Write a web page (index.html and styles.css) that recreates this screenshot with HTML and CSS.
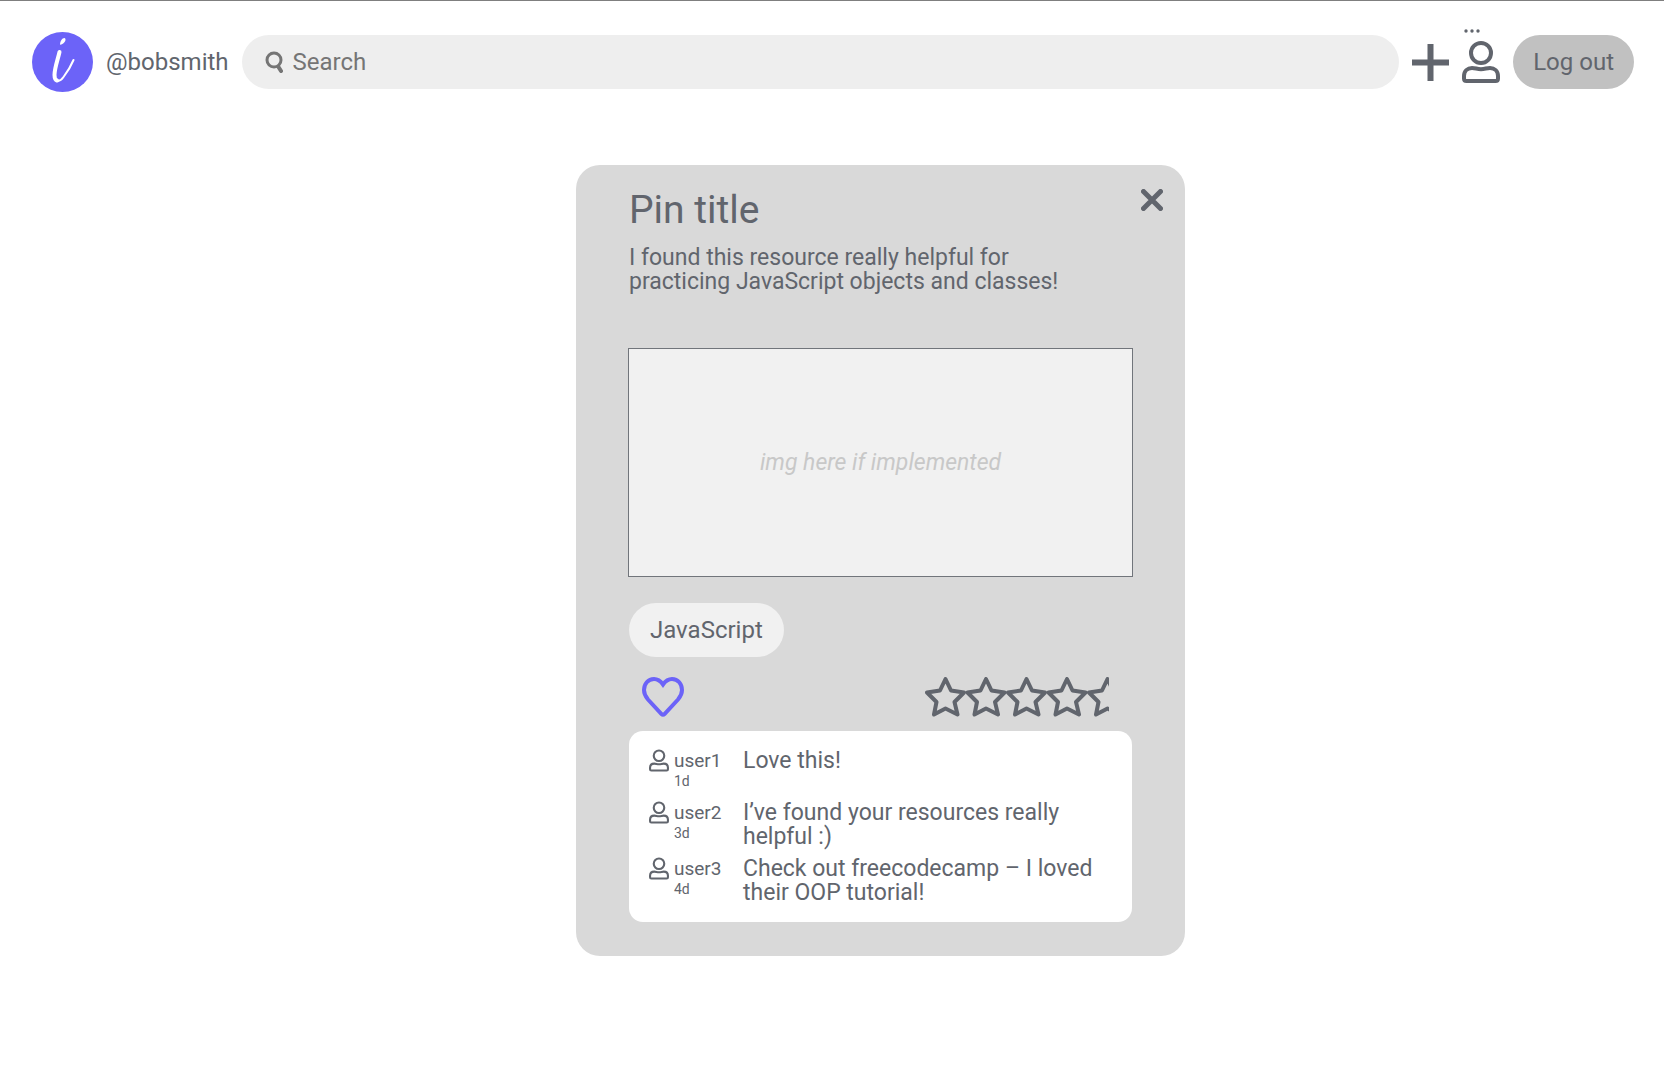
FILE: index.html
```html
<!DOCTYPE html>
<html lang="en">
<head>
<meta charset="utf-8">
<meta name="viewport" content="width=device-width, initial-scale=1">
<title>Pin title</title>
<link rel="stylesheet" href="styles.css">
</head>
<body>
<svg class="sprite" aria-hidden="true">
  <symbol id="person" viewBox="0 0 38 42">
    <g fill="none" stroke="currentColor" stroke-width="4">
      <circle cx="19" cy="12" r="10"/>
      <path d="M2 37.500V35C2 30 5.500 27 10 27C13.500 27 15 28.200 19 28.200S24.500 27 28 27C32.500 27 36 30 36 35V37.500Q36 40 33.500 40H4.500Q2 40 2 37.500Z"/>
    </g>
  </symbol>
</svg>

<header class="topbar">
  <a class="logo" href="#" aria-label="Home">
    <svg viewBox="0 0 61 60" aria-hidden="true">
      <ellipse class="logo-disc" cx="30.500" cy="30" rx="30.500" ry="30"/>
      <path d="M28 12.500C28.200 9 30 6 32.500 6C35 7 32.500 12 28.500 12.800Z" fill="#fff"/>
      <path d="M27.500 20C26 27 22 36 22.500 43C23 51 28 50 31.500 45C36 39 39 34 41.500 28" fill="none" stroke="#fff" stroke-width="2" stroke-linecap="round"/>
      <path d="M27.500 20C26 27 22.500 36 22.500 43C22.500 46 23.500 48 25 48.500" fill="none" stroke="#fff" stroke-width="4" stroke-linecap="round"/>
    </svg>
  </a>
  <a class="handle" href="#">@bobsmith</a>
  <form class="search" role="search">
    <svg class="search-icon" viewBox="0 0 18 22" aria-hidden="true">
      <g fill="none" stroke="currentColor" stroke-linecap="round"><circle cx="9" cy="9" r="7" stroke-width="3"/><path d="M13.500 16L16 20" stroke-width="4"/></g>
    </svg>
    <input class="search-input" type="search" placeholder="Search" aria-label="Search">
  </form>
  <button class="icon-button" type="button" aria-label="Add pin">
    <svg class="plus" viewBox="0 0 37 37" aria-hidden="true"><path d="M18.500 3V34M3 18.500H34" stroke="currentColor" stroke-width="6" stroke-linecap="square"/></svg>
  </button>
  <button class="icon-button profile" type="button" aria-label="Profile">
    <svg class="dots" viewBox="0 0 16 4" aria-hidden="true"><g fill="currentColor"><circle cx="2" cy="2" r="1.700"/><circle cx="8" cy="2" r="1.700"/><circle cx="14" cy="2" r="1.700"/></g></svg>
    <svg class="person-large" aria-hidden="true"><use href="#person"/></svg>
  </button>
  <button class="pill logout" type="button">Log out</button>
</header>

<main class="stage">
  <article class="card">
    <button class="icon-button close" type="button" aria-label="Close">
      <svg viewBox="0 0 22 22" aria-hidden="true"><path d="M2.500 2.500L19.500 19.500M19.500 2.500L2.500 19.500" stroke="currentColor" stroke-width="5" stroke-linecap="round"/></svg>
    </button>
    <h1 class="title">Pin title</h1>
    <p class="description">I found this resource really helpful for practicing JavaScript objects and classes!</p>
    <div class="picture">img here if implemented</div>
    <a class="pill tag" href="#">JavaScript</a>
    <div class="reactions">
      <button class="icon-button" type="button" aria-label="Like">
        <svg class="heart" viewBox="0 0 42 40" aria-hidden="true"><path d="M21 7.500C18.500 4 15.500 2 12 2C6 2 2 7 2 13C2 17 3.500 19.500 6 22.500L19.500 37Q21 38.500 22.500 37L36 22.500C38.500 19.500 40 17 40 13C40 7 36 2 30 2C26.500 2 23.500 4 21 7.500Z" fill="none" stroke="currentColor" stroke-width="4"/></svg>
      </button>
      <svg class="stars" viewBox="0 0 184 40" role="img" aria-label="4.5 stars">
        <defs><path id="star" d="M20.500 2L26 13.500L39 15.500L29.500 25L32.500 37.500L20.500 31.500L9 37.500L11.500 25L2 15.500L15 13.500Z"/></defs>
        <g fill="none" stroke="currentColor" stroke-width="4" stroke-linejoin="round">
          <use href="#star"/><use href="#star" x="40.500"/><use href="#star" x="81"/><use href="#star" x="121.500"/><use href="#star" x="162"/>
        </g>
      </svg>
    </div>
    <ul class="comments">
      <li class="comment">
        <svg class="person-small" aria-hidden="true"><use href="#person"/></svg>
        <div class="author"><a class="name" href="#">user1</a><span class="age">1d</span></div>
        <p class="message">Love this!</p>
      </li>
      <li class="comment">
        <svg class="person-small" aria-hidden="true"><use href="#person"/></svg>
        <div class="author"><a class="name" href="#">user2</a><span class="age">3d</span></div>
        <p class="message">I’ve found your resources really helpful :)</p>
      </li>
      <li class="comment">
        <svg class="person-small" aria-hidden="true"><use href="#person"/></svg>
        <div class="author"><a class="name" href="#">user3</a><span class="age">4d</span></div>
        <p class="message">Check out freecodecamp – I loved their OOP tutorial!</p>
      </li>
    </ul>
  </article>
</main>
</body>
</html>
```
FILE: styles.css
```css
*, *::before, *::after { box-sizing: border-box; }

body {
  margin: 0;
  border-top: 1px solid #7f7f7f;
  background: #fff;
  color: #61656d;
  font: 24px/24px Roboto, "Liberation Sans", sans-serif;
}

svg { display: block; }
h1, p, ul { margin: 0; padding: 0; }
a { color: inherit; text-decoration: none; }
button, input { font: inherit; color: inherit; }

.sprite { position: absolute; width: 0; height: 0; }

.topbar {
  display: flex;
  align-items: center;
  gap: 13px;
  padding: 31px 30px 0 32px;
}

.logo svg { width: 61px; height: 60px; }
.logo-disc { fill: #6c63f8; }

.search {
  display: flex;
  flex: 1;
  align-items: center;
  gap: 10px;
  height: 54px;
  padding: 0 23px;
  border-radius: 27px;
  background: #eee;
  color: #757575;
}
.search-icon { width: 18px; height: 22px; }
.search-input {
  flex: 1;
  min-width: 0;
  padding: 0;
  border: 0;
  outline: 0;
  background: none;
}
.search-input::placeholder { color: #757575; opacity: 1; }

.icon-button {
  padding: 0;
  border: 0;
  background: none;
  cursor: pointer;
}
.plus { width: 37px; height: 37px; }
.profile { position: relative; }
.person-large { width: 38px; height: 42px; }
.dots {
  position: absolute;
  top: -12px;
  left: 2px;
  width: 16px;
  height: 4px;
}

.pill {
  height: 54px;
  padding: 0 20px;
  border: 0;
  border-radius: 27px;
  line-height: 54px;
}
.logout { background: #c1c1c1; }

.stage {
  display: flex;
  justify-content: center;
  padding: 73px 0 48px 97px;
}

.card {
  position: relative;
  display: flex;
  flex-direction: column;
  align-items: stretch;
  width: 100%;
  max-width: 609px;
  padding: 21px 53px 34px;
  border-radius: 24px;
  background: #d9d9d9;
}
.close { position: absolute; top: 24px; right: 22px; }
.close svg { width: 22px; height: 22px; }

.title { font-size: 39px; font-weight: 400; line-height: 48px; }
.description, .picture, .message { font-size: 23px; }
.description { max-width: 450px; margin-top: 12px; }

.picture {
  display: grid;
  place-items: center;
  height: 229px;
  margin: 54px -1px 0;
  border: 1px solid #71757b;
  background: #f1f1f1;
  color: #c8c8c8;
  font-style: italic;
}

.tag { align-self: flex-start; margin-top: 26px; padding: 0 21px; background: #f1f1f1; }

.reactions {
  display: flex;
  justify-content: space-between;
  margin-top: 20px;
  padding: 0 23px 0 13px;
}
.heart { width: 42px; height: 40px; color: #6c63f8; }
.stars { width: 184px; height: 40px; }

.comments {
  display: grid;
  gap: 8px;
  margin-top: 14px;
  padding: 18px 20px 17px;
  border-radius: 14px;
  background: #fff;
  list-style: none;
}
.comment { display: grid; grid-template-columns: 20px 64px 1fr; column-gap: 5px; }
.person-small { width: 20px; height: 23px; }
.author { display: grid; align-content: start; }
.name { font-size: 19px; }
.age { font-size: 14px; line-height: 16px; padding-bottom: 4px; }
```
